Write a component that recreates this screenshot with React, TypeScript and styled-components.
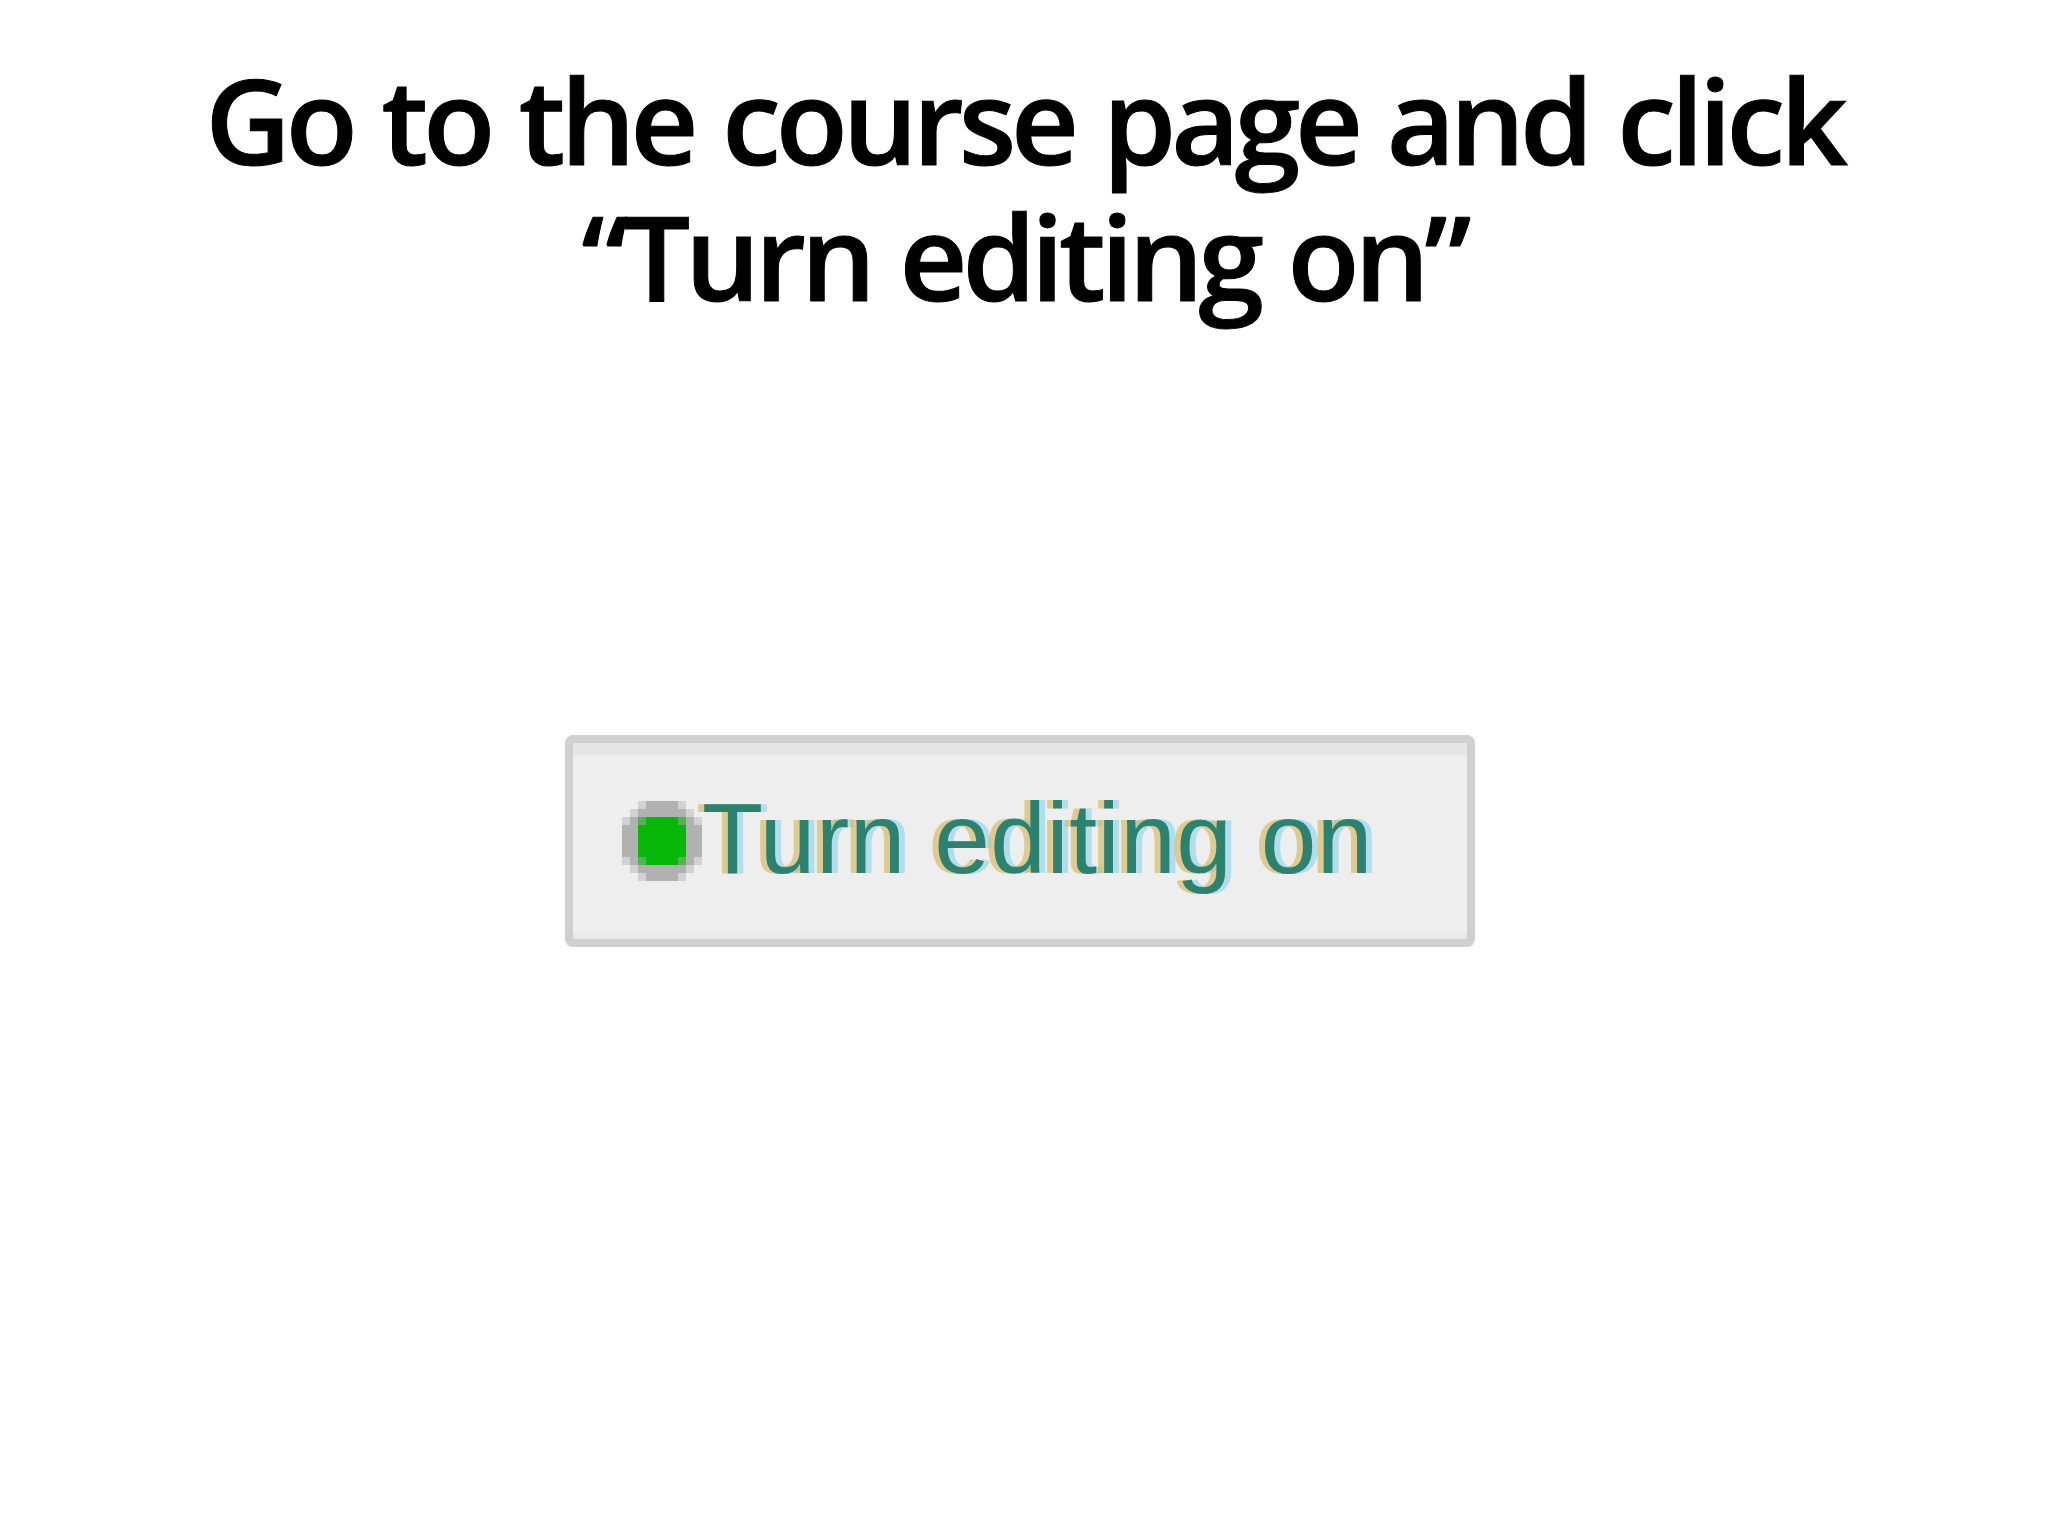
import styled, { createGlobalStyle } from "styled-components"

const GlobalStyle = createGlobalStyle`
	html, body {
		margin: 0;
		padding: 0;
		background: #ffffff;
	}
`

const Page = styled.div`
	display: flex;
	flex-direction: column;
	align-items: center;
	width: 2048px;
	height: 1536px;
	padding-top: 52px;
	box-sizing: border-box;
`

const Title = styled.h1`
	margin: 0;
	font-family: "Open Sans", "Noto Sans", sans-serif;
	font-weight: 600;
	font-size: 118px;
	line-height: 136px;
	letter-spacing: -5px;
	word-spacing: 3px;
	color: #000000;
	text-align: center;
	-webkit-text-stroke: 1px #000000;
`

const EditButton = styled.div`
	display: flex;
	align-items: center;
	box-sizing: border-box;
	width: 910px;
	height: 212px;
	margin-top: 411px;
	margin-right: 8px;
	padding-left: 49px;
	background: #eeeeee;
	border: 8px solid #d0d0d0;
	border-radius: 8px;
	box-shadow: inset 0 12px 0 #e6e6e6, inset 0 -6px 0 #e9e9e9;
`

const Label = styled.span`
	font-family: "Liberation Sans", Arial, sans-serif;
	font-size: 100px;
	line-height: 1;
	color: #2c8270;
	letter-spacing: 0.5px;
	margin-top: -6px;
	text-shadow: -6px 0 rgba(215, 180, 80, 0.6), 6px 0 rgba(140, 210, 235, 0.6);
`

const DOT = [
	"..gGGGGg..",
	".gGGGGGGg.",
	"gGmVVVVmGg",
	"GGVVVVVVGG",
	"GGVVVVVVGG",
	"GGVVVVVVGG",
	"GGVVVVVVGG",
	"gGmVVVVmGg",
	".gGGGGGGg.",
	"..gGGGGg..",
]

const DOT_COLORS: Record<string, string> = {
	g: "#d2d2d2",
	G: "#b1b1b1",
	m: "#52b352",
	V: "#08b808",
}

const StatusDot = () => (
	<svg width="80" height="80" viewBox="0 0 10 10" shapeRendering="crispEdges">
		{DOT.map((row, y) =>
			row.split("").map((c, x) =>
				DOT_COLORS[c] ? <rect key={`${x}-${y}`} x={x} y={y} width="1" height="1" fill={DOT_COLORS[c]} /> : null
			)
		)}
	</svg>
)

export default function App() {
	return (
		<>
			<GlobalStyle />
			<Page>
				<Title>
					Go to the course page and click
					<br />
					“Turn editing on”
				</Title>
				<EditButton>
					<StatusDot />
					<Label>Turn editing on</Label>
				</EditButton>
			</Page>
		</>
	)
}
